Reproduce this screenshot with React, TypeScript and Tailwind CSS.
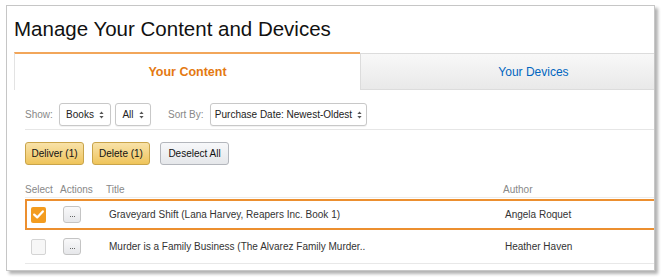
import React from "react";

function SortArrows() {
  return (
    <svg width="5" height="8" viewBox="0 0 5 8" className="ml-[5px] shrink-0">
      <path d="M2.5 0.5 L4.6 3 H0.4 Z" fill="#555" />
      <path d="M2.5 7.5 L4.6 5 H0.4 Z" fill="#555" />
    </svg>
  );
}

function Select({ label, className }: { label: string; className: string }) {
  return (
    <div
      className={
        "flex h-[23px] items-center justify-center rounded-[3px] border border-[#c8c8c8] bg-white text-[10px] text-[#222] shadow-[0_1px_1px_rgba(0,0,0,0.06)] " +
        className
      }
    >
      {label}
      <SortArrows />
    </div>
  );
}

function DotsButton() {
  return (
    <div className="flex h-[17px] w-[18px] items-end justify-center gap-[1px] rounded-[3px] border border-[#c4c4c4] bg-gradient-to-b from-[#f9f9fa] to-[#e6e7ea] pb-[5px]">
      <span className="h-[1px] w-[1px] bg-[#666]" />
      <span className="h-[1px] w-[1px] bg-[#666]" />
      <span className="h-[1px] w-[1px] bg-[#666]" />
    </div>
  );
}

function CheckBox({ checked }: { checked: boolean }) {
  if (checked) {
    return (
      <div className="flex h-[16px] w-[15px] items-center justify-center rounded-[2px] bg-[#f39c1f]">
        <svg width="11" height="9" viewBox="0 0 11 9">
          <path d="M1.2 4.6 L4.2 7.4 L9.8 1.4" fill="none" stroke="#fff" strokeWidth="2.2" strokeLinecap="round" strokeLinejoin="round" />
        </svg>
      </div>
    );
  }
  return <div className="h-[16px] w-[15px] rounded-[2px] border border-[#d4d4d4] bg-[#f7f7f7]" />;
}

const books = [
  { title: "Graveyard Shift (Lana Harvey, Reapers Inc. Book 1)", author: "Angela Roquet", selected: true },
  { title: "Murder is a Family Business (The Alvarez Family Murder..", author: "Heather Haven", selected: false },
];

function RowCells({ title, author, selected }: { title: string; author: string; selected: boolean }) {
  return (
    <>
      <div className="ml-[4px]">
        <CheckBox checked={selected} />
      </div>
      <div className="ml-[17px]">
        <DotsButton />
      </div>
      <div className="ml-[28px] w-[396px]">{title}</div>
      <div>{author}</div>
    </>
  );
}

export default function App() {
  return (
    <div className="h-[278px] w-[662px] overflow-hidden bg-white pl-[6px] pt-[5px] font-['Liberation_Sans',Arial,sans-serif]">
      <div className="h-[266px] w-[649px] overflow-hidden border border-[#c6c6c6] bg-white shadow-[3px_3px_3px_rgba(0,0,0,0.3)]">
        <div className="w-[740px]">
          <h1 className="flex h-[46px] items-center pl-[7px] text-[20.5px] font-normal text-[#111]">
            Manage Your Content and Devices
          </h1>

          <div className="ml-[7px] flex h-[38px]">
            <div className="flex w-[346px] items-center justify-center border-l border-t-2 border-l-[#e3e3e3] border-t-[#f2a65a] bg-white text-[12.5px] font-bold text-[#e47911]">
              Your Content
            </div>
            <div className="mt-[1px] flex w-[347px] items-center justify-center border border-[#dcdcdc] bg-gradient-to-b from-[#f8f8f8] to-[#e9e9e9] text-[12px] text-[#0066c0]">
              Your Devices
            </div>
          </div>

          <div className="pl-[18px]">
            <div className="flex items-center border-b border-[#e6e6e6] pb-[3px] pt-[13px]">
              <span className="w-[34px] text-[10px] text-[#888]">Show:</span>
              <Select label="Books" className="w-[52px]" />
              <Select label="All" className="ml-[4px] w-[36px]" />
              <span className="ml-[17px] w-[42px] text-[10px] text-[#888]">Sort By:</span>
              <Select label="Purchase Date: Newest-Oldest" className="w-[157px]" />
            </div>

            <div className="mt-[12px] flex h-[23px] text-[10px] text-[#111]">
              <button className="w-[59px] rounded-[3px] border border-[#c9a44a] bg-gradient-to-b from-[#f8e2a8] to-[#efc459]">
                Deliver (1)
              </button>
              <button className="ml-[8px] w-[58px] rounded-[3px] border border-[#c9a44a] bg-gradient-to-b from-[#f8e2a8] to-[#efc459]">
                Delete (1)
              </button>
              <button className="ml-[10px] w-[69px] rounded-[3px] border border-[#b3b6bc] bg-gradient-to-b from-[#f7f8fa] to-[#e5e7ea]">
                Deselect All
              </button>
            </div>

            <div className="mt-[17px] flex h-[16px] items-center border-b border-[#ececec] text-[10px] text-[#888]">
              <span className="w-[35px]">Select</span>
              <span className="w-[46px]">Actions</span>
              <span className="w-[397px]">Title</span>
              <span>Author</span>
            </div>

            <div className="mt-[1px]">
              {books.map((b) =>
                b.selected ? (
                  <div key={b.title} className="flex h-[31px] items-center border-2 border-[#ec8f2f] text-[10px] text-[#333]">
                    <RowCells {...b} />
                  </div>
                ) : (
                  <div key={b.title} className="flex h-[34px] items-center border-b border-[#e8e8e8] px-[2px] text-[10px] text-[#333]">
                    <RowCells {...b} />
                  </div>
                )
              )}
            </div>
          </div>
        </div>
      </div>
    </div>
  );
}
